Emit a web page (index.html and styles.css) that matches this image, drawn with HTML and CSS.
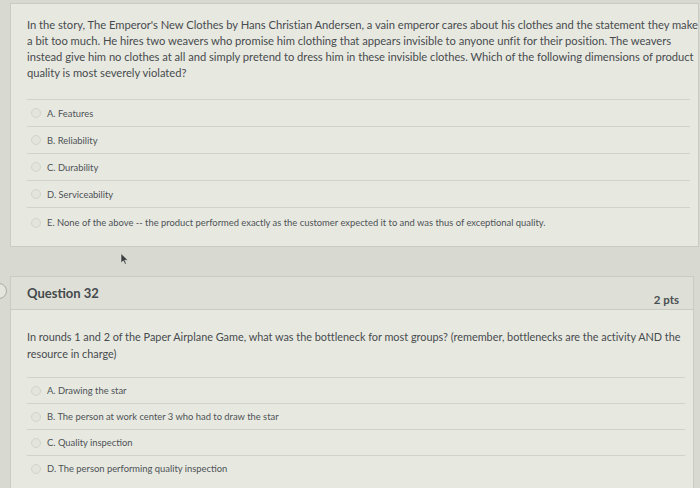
FILE: index.html
```html
<!DOCTYPE html>
<html>
<head>
<meta charset="utf-8">
<link rel="stylesheet" href="styles.css">
</head>
<body>
<div class="page">
  <section class="card card-top">
    <div class="qtext">In the story, The Emperor's New Clothes by Hans Christian Andersen, a vain emperor cares about his clothes and the statement they make a bit too much. He hires two weavers who promise him clothing that appears invisible to anyone unfit for their position. The weavers instead give him no clothes at all and simply pretend to dress him in these invisible clothes. Which of the following dimensions of product quality is most severely violated?</div>
    <ul class="answers">
      <li><span class="radio"></span>A. Features</li>
      <li><span class="radio"></span>B. Reliability</li>
      <li><span class="radio"></span>C. Durability</li>
      <li><span class="radio"></span>D. Serviceability</li>
      <li class="last"><span class="radio"></span>E. None of the above -- the product performed exactly as the customer expected it to and was thus of exceptional quality.</li>
    </ul>
  </section>

  <div class="spacer">
    <svg class="cursor" width="9" height="12" viewBox="0 0 9 12"><path d="M1 0.5 L1 10 L3.3 7.8 L5 11.3 L6.4 10.6 L4.8 7.2 L8 7.2 Z" fill="#3a3d40" stroke="#e5e7df" stroke-width="0.6"/></svg>
  </div>

  <section class="card card-bottom">
    <span class="flag"></span>
    <header class="qhead">
      <span class="qtitle">Question 32</span>
      <span class="pts">2 pts</span>
    </header>
    <div class="qbody">
      <div class="qtext q2">In rounds 1 and 2 of the Paper Airplane Game, what was the bottleneck for most groups? (remember, bottlenecks are the activity AND the resource in charge)</div>
      <ul class="answers">
        <li><span class="radio"></span>A. Drawing the star</li>
        <li><span class="radio"></span>B. The person at work center 3 who had to draw the star</li>
        <li><span class="radio"></span>C. Quality inspection</li>
        <li><span class="radio"></span>D. The person performing quality inspection</li>
      </ul>
    </div>
  </section>
</div>
</body>
</html>
```

FILE: styles.css
```css
html, body {
  margin: 0;
  padding: 0;
}
body {
  width: 700px;
  height: 488px;
  overflow: hidden;
  background: #d8dad2;
  font-family: Lato, "Open Sans", "Liberation Sans", sans-serif;
  color: #474b4e;
}
.page {
  padding: 3px 0 0 10px;
  display: flex;
  flex-direction: column;
}
.card {
  position: relative;
  background: #e7e9e1;
  border: 1px solid #c9ccc3;
}
.card-top {
  padding: 13px 0 9px 16px;
  margin-right: 1px;
}
.qtext {
  font-size: 11.2px;
  line-height: 16px;
  letter-spacing: -0.02px;
}
.answers {
  list-style: none;
  margin: 18px 0 0 0;
  padding: 0;
}
.answers li {
  height: 26px;
  border-top: 1px solid #d0d3ca;
  display: flex;
  align-items: center;
  font-size: 9.4px;
  color: #4e5255;
  padding-left: 4px;
  margin-right: 8px;
}
.card-top .answers li.last {
  height: 29px;
}
.radio {
  width: 8px;
  height: 8px;
  border-radius: 50%;
  border: 1px solid #d3d5cd;
  background: #e3e5dd;
  margin-right: 6px;
  flex: none;
}
.spacer {
  height: 29px;
  position: relative;
}
.cursor {
  position: absolute;
  left: 110px;
  top: 6px;
}
.card-bottom {
  margin-right: 6px;
}
.flag {
  position: absolute;
  left: -20px;
  top: 6px;
  width: 14px;
  height: 14px;
  border-radius: 50%;
  border: 1.5px solid #a9aca5;
  background: #e4e6de;
}
.qhead {
  height: 32px;
  background: #dee0d7;
  border-bottom: 1px solid #c9ccc3;
  display: flex;
  align-items: center;
  justify-content: space-between;
  padding: 0 14px 0 16px;
}
.qtitle {
  font-size: 13px;
  font-weight: 700;
  color: #45494c;
}
.pts {
  font-size: 11.5px;
  font-weight: 700;
  color: #4a4e51;
  padding-top: 12px;
}
.qbody {
  padding: 18px 0 8px 16px;
}
.q2 {
  font-size: 10.9px;
  line-height: 17px;
}
.qbody .answers {
  margin-top: 15px;
}
.qbody .answers li {
  height: 25px;
}
```
